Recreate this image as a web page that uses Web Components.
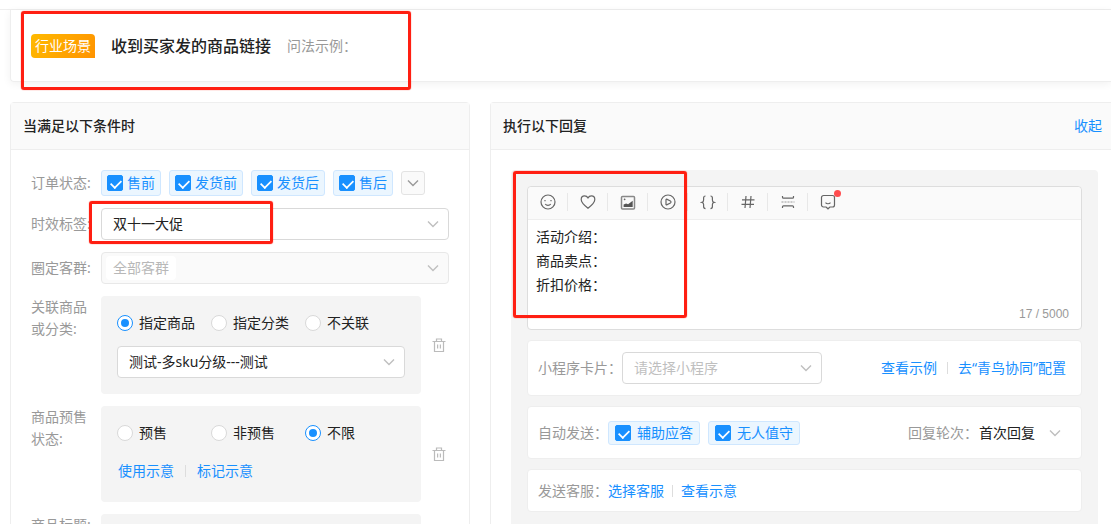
<!DOCTYPE html>
<html lang="zh-CN">
<head>
<meta charset="utf-8">
<meta name="viewport" content="width=device-width, initial-scale=1">
<title>回复设置</title>
<style>
  body {
    margin: 0;
    background: #fff;
    color: #222;
    font: 14px/22px "Noto Sans", "Noto Sans CJK SC", sans-serif;
  }
</style>
</head>
<body>
<rule-page>
  <scene-header slot="header" tag="行业场景" heading="收到买家发的商品链接" hint="问法示例："></scene-header>

  <rule-panel heading="当满足以下条件时">
    <form-stack>
      <form-row label="订单状态:">
        <chip-group>
          <check-chip>售前</check-chip>
          <check-chip>发货前</check-chip>
          <check-chip>发货后</check-chip>
          <check-chip>售后</check-chip>
          <more-button></more-button>
        </chip-group>
      </form-row>
      <form-select label="时效标签:" value="双十一大促" marked></form-select>
      <form-select label="圈定客群:" value="全部客群" disabled></form-select>
      <form-row label="关联商品或分类:" removable top>
        <grey-box>
          <radio-group label="关联商品或分类" options="指定商品,指定分类,不关联" value="指定商品"></radio-group>
          <select-box label="商品" value="测试-多sku分级---测试"></select-box>
        </grey-box>
      </form-row>
      <form-row label="商品预售状态:" removable top>
        <grey-box links>
          <radio-group label="商品预售状态" options="预售,非预售,不限" value="不限"></radio-group>
          <link-pair first="使用示意" second="标记示意"></link-pair>
        </grey-box>
      </form-row>
      <form-row label="商品标题:" top removable>
        <grey-box empty></grey-box>
      </form-row>
    </form-stack>
  </rule-panel>

  <rule-panel heading="执行以下回复" action="收起" open-end>
    <reply-area>
      <reply-editor></reply-editor>
      <reply-card kind="select">
        <select-box labelled label="小程序卡片：" value="请选择小程序" placeholder></select-box>
        <link-pair slot="end" first="查看示例" second="去“青鸟协同”配置" gap="10"></link-pair>
      </reply-card>
      <reply-card kind="chips" label="自动发送：">
        <chip-group>
          <check-chip roomy>辅助应答</check-chip>
          <check-chip roomy>无人值守</check-chip>
        </chip-group>
        <round-select slot="end" label="回复轮次：" value="首次回复"></round-select>
      </reply-card>
      <reply-card kind="links" label="发送客服：">
        <link-pair first="选择客服" second="查看示意" gap="8"></link-pair>
      </reply-card>
    </reply-area>
  </rule-panel>
</rule-page>

<script>
const define = (name, render) => customElements.define(name, class extends HTMLElement {
  connectedCallback() {
    if (this.shadowRoot) return;
    const root = this.attachShadow({ mode: 'open' });
    root.innerHTML = '<style>*{box-sizing:border-box}:host{display:block;box-sizing:border-box}</style>' +
      render((n) => this.getAttribute(n) || '', (n) => this.hasAttribute(n));
  }
});

/* Red frames that call out one region of the page */
const MARK = `.mark{position:absolute;border:3px solid #ff1f12;border-radius:3px;box-shadow:0 0 1px #ff1f12;pointer-events:none;z-index:2}`;

const ICONS = {
  down: '<path d="M3 5.5 8 10.5 13 5.5"/>',
  trash: '<path d="M1.5 4.5h13M5.5 4V2h5v2M3.5 4.5v10h9v-10M6.6 7.5v4M9.4 7.5v4"/>',
  smile: '<circle cx="8" cy="8" r="7"/><path d="M5 6v1.2M11 6v1.2M5.2 10c1.4 1.8 4.2 1.8 5.6 0"/>',
  heart: '<path d="M8 14.2C4.6 11.5 1.2 8.8 1.2 5.4 1.2 3.2 2.8 1.8 4.6 1.8 6 1.8 7.2 2.5 8 3.9c.8-1.4 2-2.1 3.4-2.1 1.8 0 3.4 1.4 3.4 3.6 0 3.4-3.4 6.1-6.8 8.8z"/>',
  image: '<rect x="1.5" y="2.5" width="13" height="12.5" rx="1" stroke="#888" stroke-width="1.5"/><path d="M3.6 13v-2.400l2.500-1.200 2 .9 4.600-3.500V13z" fill="#555" stroke="none"/><path d="M4.600 4.600v1.600M3.800 5.400h1.600" stroke-width="1"/>',
  play: '<circle cx="8" cy="8" r="7"/><path d="M6 5.600v4.800c0 .4.300.6.700.5L10.400 9c.8-.5.8-1.500 0-2L6.700 5.100c-.4-.1-.7.1-.7.5z"/>',
  braces: '<path d="M5.5 2C3.8 2 3.6 2.7 3.6 4v2c0 1.4-.5 2-1.6 2.3 1.1.3 1.6.9 1.6 2.3v2c0 1.3.2 2 1.9 2M10.5 2c1.7 0 1.9.7 1.9 2v2c0 1.4.5 2 1.6 2.3-1.1.3-1.6.9-1.6 2.3v2c0 1.3-.2 2-1.9 2"/>',
  hash: '<path d="M6 2 5 14M11 2l-1 12M2 5.8h12.5M1.5 10.4H14"/>',
  split: '<path d="M2.500 2v1.200c0 .6.400 1 1 1h9c.6 0 1-.4 1-1V2M2.500 14v-1.200c0-.6.400-1 1-1h9c.6 0 1 .4 1 1V14"/><path d="M1.500 8h13" stroke="#999" stroke-dasharray="2 1"/>',
  chat: '<path d="M3.500 1.500h9a2 2 0 0 1 2 2v7.500a2 2 0 0 1-2 2h-2.600L8 14.800 6.100 13H3.500a2 2 0 0 1-2-2V3.500a2 2 0 0 1 2-2z"/><path d="M5.500 8.600c1.200 1.500 3.800 1.500 5 0"/>'
};
const icon = (name) => `<svg viewBox="0 0 16 16" width="16" height="16" fill="none" stroke="currentColor" stroke-width="1.2" aria-hidden="true">${ICONS[name]}</svg>`;
const chevron = `<svg viewBox="0 0 16 16" width="16" height="16" fill="none" stroke="currentColor" stroke-width="1.4" aria-hidden="true">${ICONS.down}</svg>`;

const SELECT = `
  .box{position:relative;display:flex;align-items:center;height:32px;flex:1;min-width:0;border:1px solid #d9d9d9;border-radius:4px;background:#fff;color:#222}
  .box select{appearance:none;flex:1;min-width:0;height:100%;margin:0;padding:0 11px;border:0;border-radius:4px;outline:0;background:none;font:inherit;color:inherit;opacity:1}
  .box svg{flex:none;margin-right:7px;color:#bfbfbf;pointer-events:none}
  .box.placeholder{color:#bfbfbf}
  .box.off{background:#fafafa;border-color:#e8e8e8;color:#b8b8b8;justify-content:space-between}
  .box.off select{flex:none;width:70px;height:24px;margin-left:4px;padding:0 7px;background:#fff}`;
const selectBox = (value, cls = '', extra = '') =>
  `<div class="box ${cls}"><select id="s" ${extra}><option>${value}</option></select>${chevron}</div>`;

define('rule-page', () => `
  <style>
    :host{height:100vh;overflow:auto;scrollbar-width:none;padding-top:9px}
    main{border-top:1px solid #eee;padding-left:10px}
    .columns{display:grid;grid-template-columns:minmax(0,460fr) minmax(0,621fr);gap:20px;margin-top:20px}
  </style>
  <main><slot name="header"></slot><div class="columns"><slot></slot></div></main>`);

define('scene-header', (a) => `
  <style>
    ${MARK}
    :host{position:relative}
    header{display:flex;align-items:center;gap:16px;padding:24px 20px 23px;border:solid #eee;border-width:0 0 1px 1px;border-bottom-left-radius:4px;box-shadow:0 2px 8px rgba(0,0,0,.06)}
    .tag{padding:0 4px;border-radius:4px 4px 0 4px;line-height:24px;color:#fff;background:linear-gradient(120deg,#ffba00,#ff9300)}
    h1{margin:0;font-size:16px;font-weight:500;line-height:24px}
    .hint{color:#999}
    .mark{left:11px;top:1px;width:390px;height:79px}
  </style>
  <header><span class="tag">${a('tag')}</span><h1>${a('heading')}</h1><span class="hint">${a('hint')}</span></header>
  <div class="mark"></div>`);

define('rule-panel', (a, has) => `
  <style>
    section{height:100%;border:1px solid #eee;border-radius:4px 4px 0 0;${has('open-end') ? 'border-right:0;border-top-right-radius:0' : ''}}
    header{display:flex;justify-content:space-between;align-items:center;height:47px;padding:0 ${has('open-end') ? 9 : 12}px 0 12px;background:#fafafa;border-bottom:1px solid #eee}
    h2{margin:0;font-size:14px;font-weight:500;line-height:22px}
    a{color:#1890ff;text-decoration:none}
    .body{padding:20px ${has('open-end') ? 13 : 20}px 0 20px}
  </style>
  <section><header><h2>${a('heading')}</h2>${a('action') && `<a href="#">${a('action')}</a>`}</header><div class="body"><slot></slot></div></section>`);

define('form-stack', () => `<style>:host{display:flex;flex-direction:column;gap:12px}</style><slot></slot>`);

define('form-row', (a, has) => `
  <style>
    .row{display:flex;align-items:${has('top') ? 'flex-start' : 'center'}}
    .label{flex:none;width:70px;padding-right:${has('top') ? 8 : 0}px;color:#999}
    .content{flex:1;min-width:0}
    button{align-self:center;flex:none;display:flex;margin:0 2px 0 10px;padding:0;border:0;background:none;color:#bbb}
  </style>
  <div class="row" role="group" aria-labelledby="l">
    <span class="label" id="l">${a('label')}</span><div class="content"><slot></slot></div>
    ${has('removable') ? `<button type="button" aria-label="删除">${icon('trash')}</button>` : ''}
  </div>`);

define('form-select', (a, has) => `
  <style>
    ${MARK}${SELECT}
    :host{position:relative}
    .row{display:flex;align-items:center}
    label{flex:none;width:70px;color:#999}
    .mark{left:58px;top:-7px;width:184px;height:43px}
  </style>
  <div class="row"><label for="s">${a('label')}</label>${selectBox(a('value'), has('disabled') ? 'off' : '', has('disabled') ? 'disabled' : '')}</div>
  ${has('marked') ? '<div class="mark"></div>' : ''}`);

define('select-box', (a, has) => `
  <style>
    ${SELECT}
    .row{display:flex;align-items:center}
    label{flex:none;color:#999}
    .box.placeholder{flex:none;width:200px}
  </style>
  <div class="row">${has('labelled') ? `<label for="s">${a('label')}</label>` : ''}${selectBox(a('value'), has('placeholder') ? 'placeholder' : '', has('labelled') ? '' : `aria-label="${a('label')}"`)}</div>`);

define('round-select', (a) => `
  <style>
    ${SELECT}
    :host{display:flex;align-items:center}
    label{color:#999}
    .box{flex:none;height:24px;border:0;gap:12px}
    .box select{flex:none;padding:0 0 0 1px}
    .box svg{margin-right:3px}
  </style>
  <label for="s">${a('label')}</label>${selectBox(a('value'))}`);

define('chip-group', () => `<style>:host{display:flex;align-items:center;gap:8px}</style><slot></slot>`);

define('check-chip', (a, has) => `
  <style>
    label{display:flex;align-items:center;gap:${has('roomy') ? 6 : 4}px;height:${has('roomy') ? 24 : 26}px;padding:0 ${has('roomy') ? 6 : 5}px;border:1px solid #cfe7ff;border-radius:3px;background:#ebf6ff;color:#1890ff;white-space:nowrap}
    input{appearance:none;position:relative;flex:none;width:16px;height:16px;margin:0;border:1px solid #1890ff;border-radius:2px;background:#fff}
    input:checked{background:#1890ff}
    input:checked::before{content:"";position:absolute;left:2px;top:3px;width:10px;height:6px;border:solid #fff;border-width:0 0 2px 2px;transform:rotate(-45deg) scale(.85)}
  </style>
  <label><input type="checkbox" checked><slot></slot></label>`);

define('more-button', () => `
  <style>button{display:flex;align-items:center;justify-content:center;width:24px;height:24px;padding:0;border:1px solid #e3e3e3;border-radius:3px;background:#fafafa;color:#999}</style>
  <button type="button" aria-label="更多">${chevron}</button>`);

define('grey-box', (a, has) => `
  <style>:host{display:flex;flex-direction:column;gap:${has('links') ? 16 : 12}px;padding:16px 16px ${has('links') ? 20 : 16}px;border-radius:4px;background:#f4f4f4;${has('empty') ? 'min-height:98px' : ''}}</style>
  <slot></slot>`);

define('radio-group', (a) => `
  <style>
    .group{display:flex}
    label{display:flex;align-items:center;gap:6px;width:94px;white-space:nowrap}
    input{appearance:none;display:grid;place-content:center;flex:none;width:16px;height:16px;margin:0;border:1px solid #d9d9d9;border-radius:50%;background:#fff}
    input:checked{border-color:#1890ff}
    input:checked::before{content:"";width:8px;height:8px;border-radius:50%;background:#1890ff}
  </style>
  <div class="group" role="radiogroup" aria-label="${a('label')}">
    ${a('options').split(',').map((o) => `<label><input type="radio" name="r" ${o === a('value') ? 'checked' : ''}>${o}</label>`).join('')}
  </div>`);

define('link-pair', (a, has) => `
  <style>
    :host{display:flex;align-items:center;gap:${a('gap') || 11}px;${has('gap') ? '' : 'padding-left:1px'}}
    a{color:#1890ff;text-decoration:none;white-space:nowrap}
    i{width:1px;height:12px;background:#ddd}
  </style>
  <a href="#">${a('first')}</a><i></i><a href="#">${a('second')}</a>`);

define('reply-area', () => `
  <style>:host{display:flex;flex-direction:column;gap:10px;padding:16px;border-radius:4px;background:#f4f4f4}</style><slot></slot>`);

define('reply-editor', () => `
  <style>
    ${MARK}
    :host{position:relative}
    .editor{border:1px solid #ddd;border-radius:4px;background:#fff}
    .tools{display:flex;height:33px;border-bottom:1px solid #eee;background:#fafafa;border-radius:4px 4px 0 0}
    button{position:relative;display:flex;align-items:center;justify-content:center;width:40px;padding:0 0 2px;border:0;background:none;color:#666}
    button:not(:last-child)::after{content:"";position:absolute;right:0;top:6px;width:1px;height:18px;background:#e8e8e8}
    .dot{position:absolute;right:7px;top:3px;width:7px;height:7px;border-radius:50%;background:#ff4d4f}
    textarea{display:block;width:100%;height:84px;padding:5px 8px;border:0;outline:0;resize:none;background:none;font:inherit;line-height:24px;color:#222}
    .count{padding:0 12px 5px;text-align:right;color:#999;font:12px/20px "Liberation Sans",sans-serif}
    .mark{left:-14px;top:-15px;width:174px;height:147px}
  </style>
  <div class="editor">
    <div class="tools">
      ${[['smile', '表情'], ['heart', '收藏'], ['image', '图片'], ['play', '视频'], ['braces', '变量'], ['hash', '话题'], ['split', '分段'], ['chat', '智能话术']]
        .map(([n, t]) => `<button type="button" aria-label="${t}">${icon(n)}${n === 'chat' ? '<span class="dot"></span>' : ''}</button>`).join('')}
    </div>
    <textarea aria-label="回复内容">活动介绍：
商品卖点：
折扣价格：</textarea>
    <div class="count">17 / 5000</div>
  </div>
  <div class="mark"></div>`);

define('reply-card', (a) => `
  <style>
    .card{display:flex;align-items:center;justify-content:space-between;padding:${{ select: 11, chips: 14, links: 10 }[a('kind')]}px 15px ${{ select: 11, chips: 13, links: 9 }[a('kind')]}px 10px;border:1px solid #eee;border-radius:4px;background:#fff}
    .start{display:flex;align-items:center}
    .label{color:#999}
  </style>
  <div class="card" role="group" aria-label="${a('label')}">
    <div class="start">${a('label') && `<span class="label">${a('label')}</span>`}<slot></slot></div>
    <slot name="end"></slot>
  </div>`);
</script>
</body>
</html>
